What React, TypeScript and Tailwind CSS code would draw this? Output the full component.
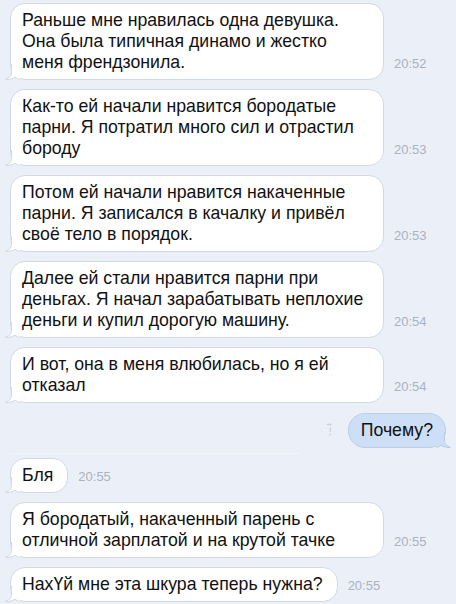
import React from "react";

type Msg = { text: string; time?: string; out?: boolean };

const messages: Msg[] = [
  { text: "Раньше мне нравилась одна девушка. Она была типичная динамо и жестко меня френдзонила.", time: "20:52" },
  { text: "Как-то ей начали нравится бородатые парни. Я потратил много сил и отрастил бороду", time: "20:53" },
  { text: "Потом ей начали нравится накаченные парни. Я записался в качалку и привёл своё тело в порядок.", time: "20:53" },
  { text: "Далее ей стали нравится парни при деньгах. Я начал зарабатывать неплохие деньги и купил дорогую машину.", time: "20:54" },
  { text: "И вот, она в меня влюбилась, но я ей отказал", time: "20:54" },
  { text: "Почему?", out: true },
  { text: "Бля", time: "20:55" },
  { text: "Я бородатый, накаченный парень с отличной зарплатой и на крутой тачке", time: "20:55" },
  { text: "НахҮй мне эта шкура теперь нужна?", time: "20:55" },
];

function TailLeft() {
  return (
    <svg className="absolute -left-[7px] -bottom-[1px]" width="16" height="16" viewBox="0 0 16 16">
      <path
        d="M8 0 L8 8 C8 11.5 6 14 1.5 15.4 C5.5 15.8 9 14.8 11 13.2 C12.5 14.4 14 15 16 15.2 L16 0 Z"
        fill="#ffffff"
      />
      <path
        d="M7.5 0 L7.5 8 C7.5 11.5 5.5 14 1.5 15.4 C5.5 15.8 9 14.8 11 13.2 C12.5 14.4 14 15 16 15.5"
        fill="none"
        stroke="#d3d9e2"
        strokeWidth="1"
      />
    </svg>
  );
}

function TailRight() {
  return (
    <svg className="absolute -right-[7px] -bottom-[1px]" width="16" height="16" viewBox="0 0 16 16">
      <path
        d="M8 0 L8 8 C8 11.5 10 14 14.5 15.4 C10.5 15.8 7 14.8 5 13.2 C3.5 14.4 2 15 0 15.2 L0 0 Z"
        fill="#cddff6"
      />
      <path
        d="M8.5 0 L8.5 8 C8.5 11.5 10.5 14 14.5 15.4 C10.5 15.8 7 14.8 5 13.2 C3.5 14.4 2 15 0 15.5"
        fill="none"
        stroke="#b9cbe4"
        strokeWidth="1"
      />
    </svg>
  );
}

export default function App() {
  return (
    <div
      className="w-[456px] h-[604px] overflow-hidden bg-[#ebf0f8] pt-[3px] text-[#111111]"
      style={{ fontFamily: '"Liberation Sans", Arial, sans-serif' }}
    >
      <div className="flex flex-col gap-[9px]">
        {messages.map((m, i) =>
          m.out ? (
            <div key={i} className="relative flex items-center justify-end gap-[14px] pr-[10px] pt-[1px] pb-[1px]">
              {/* sending indicator */}
              <svg width="8" height="14" viewBox="0 0 8 14" className="mb-[2px]">
                <path d="M1 1.5 L5 1 L4 3 M4.5 5 L4 9 M4 10.5 L4.2 12.5" stroke="#c3c9d2" strokeWidth="1" fill="none" />
              </svg>
              <div className="relative rounded-[17px] border border-[#bccde5] bg-[#cddff6] px-[12px] py-[6px] text-[17.7px] leading-[21px]">
                {m.text}
                <TailRight />
              </div>
              {/* faint divider under the sent message */}
              <div className="absolute left-[10px] -bottom-[5px] h-px w-[290px] bg-[#f2f5fa]" />
            </div>
          ) : (
            <div key={i} className="flex items-end gap-[10px] pl-[10px]">
              <div className="relative max-w-[374px] rounded-[15px] border border-[#d3d9e2] bg-white pl-[11px] pr-[14px] py-[6px] text-[17.7px] leading-[21px]">
                {m.text}
                <TailLeft />
              </div>
              <span className="pb-[9px] text-[13px] leading-[15px] text-[#a9b2bf] whitespace-nowrap">{m.time}</span>
            </div>
          )
        )}
      </div>
    </div>
  );
}
